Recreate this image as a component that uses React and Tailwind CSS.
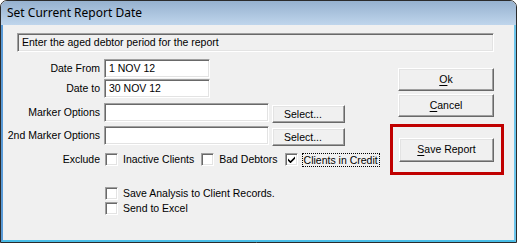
const sunken =
  'border border-t-[#a0a0a0] border-l-[#a0a0a0] border-r-white border-b-white shadow-[inset_1px_1px_0_#696969,inset_-1px_-1px_0_#e3e3e3]';

const raised =
  'border border-t-white border-l-white border-r-[#696969] border-b-[#696969] shadow-[inset_-1px_-1px_0_#a0a0a0,inset_1px_1px_0_#e3e3e3] bg-[#f0f0f0]';

const CheckBox = ({ checked }) => (
  <span className={`w-[13px] h-[13px] shrink-0 bg-white flex items-center justify-center ${sunken}`}>
    {checked && (
      <svg width="7" height="7" viewBox="0 0 7 7">
        <path d="M0 2.5 L2.5 5 L7 0.5 L7 2.8 L2.5 7.3 L0 4.8 Z" fill="#000" />
      </svg>
    )}
  </span>
);

const TextBox = ({ value, wide }) => (
  <div
    className={`h-[19px] bg-white flex items-center pl-[4px] ${wide ? 'w-[165px]' : 'w-[106px]'} ${sunken}`}
  >
    {value}
  </div>
);

const SelectButton = () => (
  <button className={`ml-[3px] mt-[2px] w-[73px] h-[18px] text-left pl-[11px] leading-none ${raised}`}>
    Select...
  </button>
);

const App = () => {
  return (
    <div className="w-[517px] h-[243px] bg-white font-['Liberation_Sans',Arial,sans-serif] text-[10.5px] text-black">
      <div className="w-full h-full flex flex-col border border-[#2b2b2b] rounded-t-[7px] overflow-hidden bg-[#f0f0f0]">
        {/* title bar */}
        <div className="h-[24px] shrink-0 pl-[6px] flex items-center bg-[linear-gradient(to_bottom,#96b1cf,#bfd5ec)] font-['Noto_Sans',sans-serif] text-[12px]">
          Set Current Report Date
        </div>

        <div className="flex-1 border-l-2 border-r-2 border-b-2 border-l-[#5a9ad6] border-r-[#6cc4ea] border-b-[#48bde6]">
          <div className={`mt-[8px] ml-[14px] w-[477px] h-[19px] flex items-center pl-[4px] ${sunken} bg-[#f0f0f0]`}>
            Enter the aged debtor period for the report
          </div>

          <div className="flex">
            {/* left side */}
            <div className="w-[387px]">
              <div className="mt-[7px] flex items-center">
                <span className="w-[97px] text-right">Date From</span>
                <div className="ml-[4px]">
                  <TextBox value="1 NOV 12" />
                </div>
              </div>
              <div className="mt-[1px] flex items-center">
                <span className="w-[97px] text-right">Date to</span>
                <div className="ml-[4px]">
                  <TextBox value="30 NOV 12" />
                </div>
              </div>
              <div className="mt-[5px] flex items-start">
                <span className="w-[97px] h-[19px] flex items-center justify-end">Marker Options</span>
                <div className="ml-[4px]">
                  <TextBox value="" wide />
                </div>
                <SelectButton />
              </div>
              <div className="mt-[3px] flex items-start">
                <span className="w-[97px] h-[19px] flex items-center justify-end">2nd Marker Options</span>
                <div className="ml-[4px]">
                  <TextBox value="" wide />
                </div>
                <SelectButton />
              </div>

              <div className="mt-[7px] h-[13px] flex items-center">
                <span className="w-[97px] text-right">Exclude</span>
                <span className="ml-[5px]">
                  <CheckBox />
                </span>
                <span className="ml-[5px]">Inactive Clients</span>
                <span className="ml-[7px]">
                  <CheckBox />
                </span>
                <span className="ml-[5px]">Bad Debtors</span>
                <span className="ml-[7px]">
                  <CheckBox checked />
                </span>
                <span className="ml-[4px] px-[1px] border border-dotted border-black leading-[12px]">
                  Clients in Credit
                </span>
              </div>

              <div className="mt-[21px] h-[13px] pl-[102px] flex items-center">
                <CheckBox />
                <span className="ml-[5px]">Save Analysis to Client Records.</span>
              </div>
              <div className="mt-[2px] h-[13px] pl-[102px] flex items-center">
                <CheckBox />
                <span className="ml-[5px]">Send to Excel</span>
              </div>
            </div>

            {/* right side */}
            <div className="pt-[16px]">
              <button className={`ml-[8px] w-[96px] h-[23px] flex items-center justify-center ${raised}`}>
                <span className="underline underline-offset-2">O</span>k
              </button>
              <button className={`ml-[8px] mt-[3px] w-[96px] h-[23px] flex items-center justify-center ${raised}`}>
                <span className="underline underline-offset-2">C</span>ancel
              </button>
              <div className="mt-[7px] w-[114px] h-[51px] border-[3px] border-[#c00000] pl-[6px] pt-[11px]">
                <button className={`w-[95px] h-[24px] flex items-center justify-center ${raised}`}>
                  <span className="underline underline-offset-2">S</span>ave Report
                </button>
              </div>
            </div>
          </div>
        </div>
      </div>
    </div>
  );
};

export default App;
